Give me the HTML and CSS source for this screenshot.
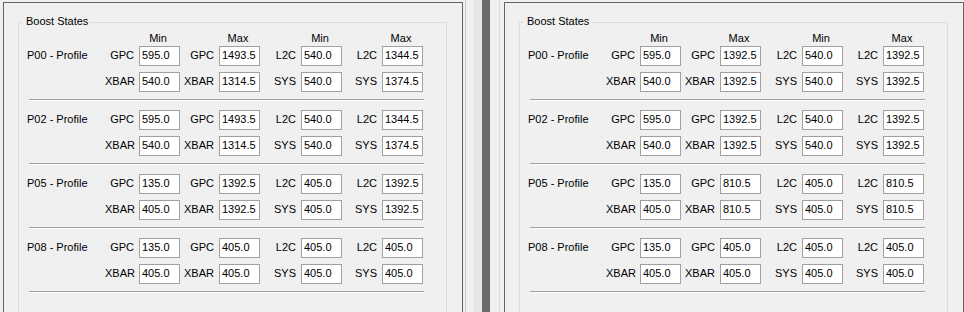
FILE: index.html
```html
<!DOCTYPE html>
<html lang="en">
<head>
    <meta charset="UTF-8">
    <title>Boost States</title>
    <link rel="stylesheet" href="styles.css">
</head>
<body>
    <div class="panel">
        <div class="group">
            <span class="legend">Boost States</span>
            <div class="grid head">
                <span></span><span></span><span class="hd">Min</span><span></span><span class="hd">Max</span><span></span><span class="hd">Min</span><span></span><span class="hd">Max</span>
            </div>

            <div class="grid">
                <span class="name">P00 - Profile</span>
                <span class="lbl">GPC</span><input value="595.0" readonly>
                <span class="lbl">GPC</span><input value="1493.5" readonly>
                <span class="lbl">L2C</span><input value="540.0" readonly>
                <span class="lbl">L2C</span><input value="1344.5" readonly>
                <span></span>
                <span class="lbl">XBAR</span><input value="540.0" readonly>
                <span class="lbl">XBAR</span><input value="1314.5" readonly>
                <span class="lbl">SYS</span><input value="540.0" readonly>
                <span class="lbl">SYS</span><input value="1374.5" readonly>
            </div>
            <div class="sep"></div>

            <div class="grid">
                <span class="name">P02 - Profile</span>
                <span class="lbl">GPC</span><input value="595.0" readonly>
                <span class="lbl">GPC</span><input value="1493.5" readonly>
                <span class="lbl">L2C</span><input value="540.0" readonly>
                <span class="lbl">L2C</span><input value="1344.5" readonly>
                <span></span>
                <span class="lbl">XBAR</span><input value="540.0" readonly>
                <span class="lbl">XBAR</span><input value="1314.5" readonly>
                <span class="lbl">SYS</span><input value="540.0" readonly>
                <span class="lbl">SYS</span><input value="1374.5" readonly>
            </div>
            <div class="sep"></div>

            <div class="grid">
                <span class="name">P05 - Profile</span>
                <span class="lbl">GPC</span><input value="135.0" readonly>
                <span class="lbl">GPC</span><input value="1392.5" readonly>
                <span class="lbl">L2C</span><input value="405.0" readonly>
                <span class="lbl">L2C</span><input value="1392.5" readonly>
                <span></span>
                <span class="lbl">XBAR</span><input value="405.0" readonly>
                <span class="lbl">XBAR</span><input value="1392.5" readonly>
                <span class="lbl">SYS</span><input value="405.0" readonly>
                <span class="lbl">SYS</span><input value="1392.5" readonly>
            </div>
            <div class="sep"></div>

            <div class="grid">
                <span class="name">P08 - Profile</span>
                <span class="lbl">GPC</span><input value="135.0" readonly>
                <span class="lbl">GPC</span><input value="405.0" readonly>
                <span class="lbl">L2C</span><input value="405.0" readonly>
                <span class="lbl">L2C</span><input value="405.0" readonly>
                <span></span>
                <span class="lbl">XBAR</span><input value="405.0" readonly>
                <span class="lbl">XBAR</span><input value="405.0" readonly>
                <span class="lbl">SYS</span><input value="405.0" readonly>
                <span class="lbl">SYS</span><input value="405.0" readonly>
            </div>
            <div class="sep"></div>
        </div>
    </div>

    <div class="splitter"></div>

    <div class="panel">
        <div class="group">
            <span class="legend">Boost States</span>
            <div class="grid head">
                <span></span><span></span><span class="hd">Min</span><span></span><span class="hd">Max</span><span></span><span class="hd">Min</span><span></span><span class="hd">Max</span>
            </div>

            <div class="grid">
                <span class="name">P00 - Profile</span>
                <span class="lbl">GPC</span><input value="595.0" readonly>
                <span class="lbl">GPC</span><input value="1392.5" readonly>
                <span class="lbl">L2C</span><input value="540.0" readonly>
                <span class="lbl">L2C</span><input value="1392.5" readonly>
                <span></span>
                <span class="lbl">XBAR</span><input value="540.0" readonly>
                <span class="lbl">XBAR</span><input value="1392.5" readonly>
                <span class="lbl">SYS</span><input value="540.0" readonly>
                <span class="lbl">SYS</span><input value="1392.5" readonly>
            </div>
            <div class="sep"></div>

            <div class="grid">
                <span class="name">P02 - Profile</span>
                <span class="lbl">GPC</span><input value="595.0" readonly>
                <span class="lbl">GPC</span><input value="1392.5" readonly>
                <span class="lbl">L2C</span><input value="540.0" readonly>
                <span class="lbl">L2C</span><input value="1392.5" readonly>
                <span></span>
                <span class="lbl">XBAR</span><input value="540.0" readonly>
                <span class="lbl">XBAR</span><input value="1392.5" readonly>
                <span class="lbl">SYS</span><input value="540.0" readonly>
                <span class="lbl">SYS</span><input value="1392.5" readonly>
            </div>
            <div class="sep"></div>

            <div class="grid">
                <span class="name">P05 - Profile</span>
                <span class="lbl">GPC</span><input value="135.0" readonly>
                <span class="lbl">GPC</span><input value="810.5" readonly>
                <span class="lbl">L2C</span><input value="405.0" readonly>
                <span class="lbl">L2C</span><input value="810.5" readonly>
                <span></span>
                <span class="lbl">XBAR</span><input value="405.0" readonly>
                <span class="lbl">XBAR</span><input value="810.5" readonly>
                <span class="lbl">SYS</span><input value="405.0" readonly>
                <span class="lbl">SYS</span><input value="810.5" readonly>
            </div>
            <div class="sep"></div>

            <div class="grid">
                <span class="name">P08 - Profile</span>
                <span class="lbl">GPC</span><input value="135.0" readonly>
                <span class="lbl">GPC</span><input value="405.0" readonly>
                <span class="lbl">L2C</span><input value="405.0" readonly>
                <span class="lbl">L2C</span><input value="405.0" readonly>
                <span></span>
                <span class="lbl">XBAR</span><input value="405.0" readonly>
                <span class="lbl">XBAR</span><input value="405.0" readonly>
                <span class="lbl">SYS</span><input value="405.0" readonly>
                <span class="lbl">SYS</span><input value="405.0" readonly>
            </div>
            <div class="sep"></div>
        </div>
    </div>
</body>
</html>
```

FILE: styles.css
```css
html, body {
    height: 312px;
    overflow: hidden;
}
body {
    margin: 0;
    padding-left: 3px;
    display: flex;
    align-items: flex-start;
    background-color: #f0f0f0;
    font-family: "Liberation Sans", Arial, sans-serif;
    font-size: 11px;
    color: #000;
}
.panel {
    box-sizing: border-box;
    width: 460px;
    height: 310px;
    margin-top: 2px;
    border: 1px solid #646464;
    border-bottom: none;
    flex-shrink: 0;
}
.splitter {
    width: 41px;
    height: 312px;
    flex-shrink: 0;
    background: linear-gradient(to right,
        #f0f0f0 0 2px, #c8c8c8 2px 3px, #f0f0f0 3px 11px,
        #dcdcdc 11px 12px, #e6e6e6 12px 19px, #6b6b6b 19px 27px,
        #f0f0f0 27px 36px, #dcdcdc 36px 37px, #f0f0f0 37px);
}
.group {
    position: relative;
    box-sizing: border-box;
    width: 429px;
    height: 290px;
    margin: 19px 0 0 14px;
    padding: 9px 0 0 8px;
    border: 1px solid #dcdcdc;
    border-bottom: none;
}
.legend {
    position: absolute;
    top: -8px;
    left: 3px;
    padding: 0 2px 0 4px;
    line-height: 13px;
    background-color: #f0f0f0;
}
.grid {
    display: grid;
    grid-template-columns: 78px 34px 41px 39px 41px 41px 41px 40px 41px;
    grid-auto-rows: 20px;
    row-gap: 6px;
}
.grid.head {
    grid-auto-rows: 13px;
    line-height: 13px;
    margin-bottom: 1px;
}
.hd {
    text-align: center;
    padding-right: 3px;
}
.name, .lbl {
    line-height: 18px;
    white-space: nowrap;
}
.lbl {
    text-align: right;
    padding-right: 5px;
}
input {
    box-sizing: border-box;
    width: 41px;
    height: 20px;
    margin: 0;
    padding: 0 0 2px 2px;
    border: 1px solid #a0a0a0;
    background-color: #fff;
    font-family: inherit;
    font-size: 11px;
    color: #000;
    outline: none;
}
.sep {
    width: 395px;
    margin: 7px 0 9px 2px;
    border-top: 1px solid #a0a0a0;
    border-bottom: 1px solid #fff;
}
.group .sep:last-child {
    margin-bottom: 0;
}
```
